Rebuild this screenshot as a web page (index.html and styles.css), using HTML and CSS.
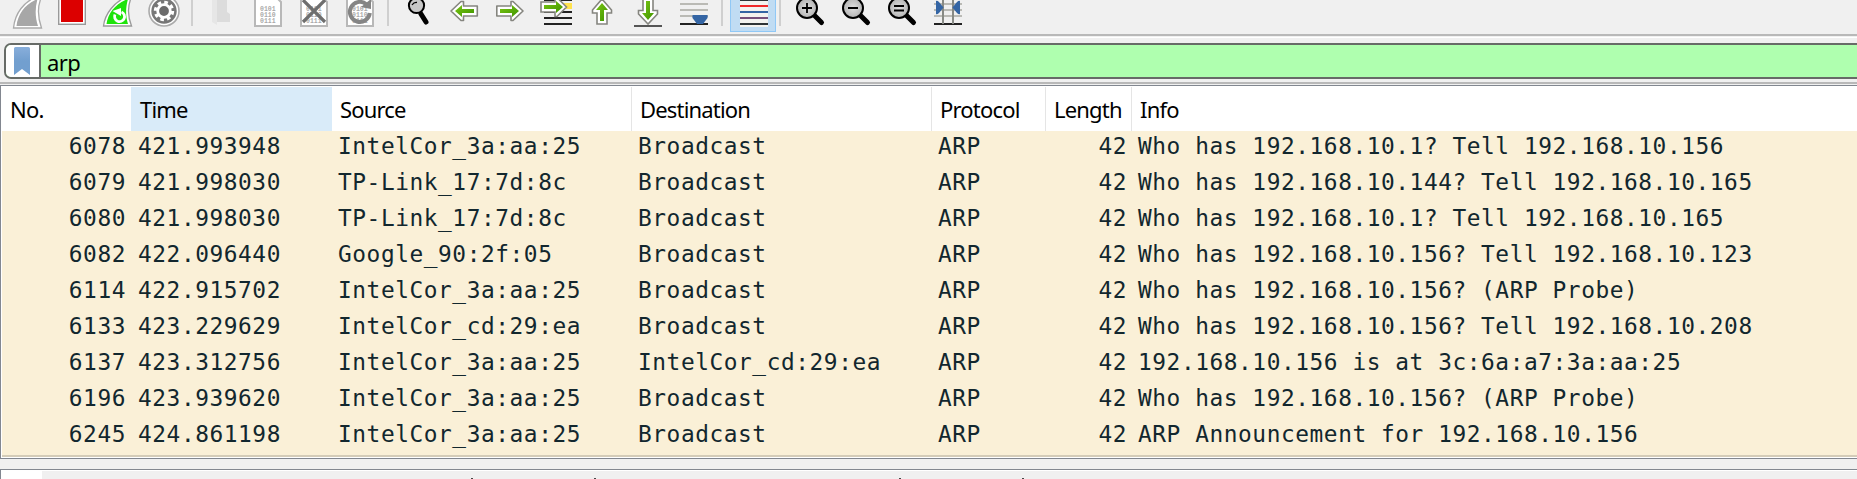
FILE: index.html
```
<!DOCTYPE html>
<html lang="en">
<head>
<meta charset="utf-8">
<title>Packet list</title>
<link rel="stylesheet" href="styles.css">
</head>
<body>
<div class="toolbar">
<svg class="icons" width="1000" height="34" viewBox="0 0 1000 34">
  <defs>
    <linearGradient id="green" x1="0" y1="0" x2="1" y2="1"><stop offset="0" stop-color="#7ac613"/><stop offset="1" stop-color="#3f9400"/></linearGradient>
    <radialGradient id="lens"><stop offset="0" stop-color="#e0e0e0"/><stop offset="1" stop-color="#b4b4b4"/></radialGradient>
    <g id="digits" class="bits"><text x="7" y="11">0101</text><text x="7" y="17">0110</text><text x="7" y="23">0111</text></g>
  </defs>
  <!-- capture -->
  <path d="M13.500 28C15 13 24 2 36 -3H41.500C37 7 38 18 41.500 28Z" fill="#fff" stroke="#aaa" stroke-width="1.300"/>
  <path d="M16.500 26C18 14 25 4 37.500 -1C35 8 35 17 38 26Z" fill="#a7a7a7"/>
  <rect x="58.700" y="-5" width="26.600" height="29.300" fill="#fff" stroke="#999" stroke-width="1.400"/>
  <rect x="61" y="-5" width="22" height="27" fill="#dc0000"/>
  <path d="M103.500 26C105 13 115 2 126 -3H131.500C127 7 128 17 131.500 26Z" fill="#fff" stroke="#999" stroke-width="1.300"/>
  <path d="M106.500 24C108 13 116 3 128 -1C125.500 8 125.500 16 128 24Z" fill="#1ee30b"/>
  <path d="M115 14.500A5 5 0 1 0 121.500 12" fill="none" stroke="#fff" stroke-width="2.800"/><path d="M112.500 11L121 8V16Z" fill="#fff"/>
  <circle cx="164" cy="11" r="15" fill="#fff" stroke="#aaa" stroke-width="1.600"/>
  <circle cx="164" cy="11" r="12.700" fill="#777"/>
  <circle cx="164" cy="11" r="8.600" fill="none" stroke="#fff" stroke-width="3.200" stroke-dasharray="3.600 3.155"/>
  <circle cx="164" cy="11" r="6.300" fill="#6b6b6b" stroke="#fff" stroke-width="2.800"/>
  <path d="M192 0V26M388 0V26M722 0V26M780 0V26" stroke="#cfcfcf" stroke-width="2"/>
  <!-- files -->
  <path d="M212 -2H217V25L212 22Z" fill="#e6e6e6"/><path d="M217 0H227V12L230 14V22H217Z" fill="#dcdcdc"/>
  <g fill="#fff" stroke="#b8b8b8" stroke-width="2">
    <path d="M255 26V-3H276L281 2V26Z"/><path d="M301 26V-3H322L327 2V26Z"/><path d="M347 26V-3H368L373 2V26Z"/>
  </g>
  <use href="#digits" x="253"/><use href="#digits" x="299"/><use href="#digits" x="345"/>
  <path d="M303 0L325 22M325 0L303 22" stroke="#6e6e6e" stroke-width="3.200"/>
  <path d="M366 4A10 10 0 1 0 369.800 13" fill="none" stroke="#858585" stroke-width="4"/><path d="M361 7L371 9V-1Z" fill="#858585"/>
  <!-- find -->
  <path d="M421 14L426 22" stroke="#000" stroke-width="5" stroke-linecap="round"/>
  <circle cx="416.500" cy="5.500" r="7.600" fill="#c8c8c8" stroke="#000" stroke-width="2"/>
  <path d="M412 5Q414 2 417 2.500" fill="none" stroke="#000" stroke-width="1.300"/>
  <!-- navigation -->
  <g fill="#fff" stroke="#85857f" stroke-width="1.600" stroke-linejoin="round">
    <path d="M451 11L461 1.500H463.500V6H477.300V16H463.500V20.500H461Z"/>
    <path d="M523 11L513 1.500H511V6H496.800V16H511V20.500H513Z"/>
  </g>
  <path d="M455 11L462 5V9H474V13H462V17Z" fill="url(#green)"/>
  <path d="M519 11L512 5V9H500V13H512V17Z" fill="url(#green)"/>
  <path d="M544 0H572M544 12H572M544 18H572M544 24H572" stroke="#222" stroke-width="2"/>
  <rect x="562" y="3" width="10" height="6" fill="#ffe24d"/>
  <path d="M566.500 7L557 -2.500H555V2H541V12H555V16.500H557Z" fill="#fff" stroke="#85857f" stroke-width="1.600"/>
  <path d="M563 7L556 1V5H544V9H556V13Z" fill="url(#green)"/>
  <path d="M602 -1L611.500 10V13H607V24H597V13H592.500V10Z" fill="#fff" stroke="#85857f" stroke-width="1.600"/>
  <path d="M602 3L608 10H604V21H600V10H596Z" fill="url(#green)"/>
  <path d="M648 24L638.500 14V10.500H643V-2H653V10.500H657.500V14Z" fill="#fff" stroke="#85857f" stroke-width="1.600"/>
  <path d="M648 20L642 13H646V1H650V13H654Z" fill="url(#green)"/>
  <path d="M634 26H662" stroke="#555" stroke-width="2"/>
  <path d="M680 4H708M680 10H708M680 16H708" stroke="#babab5" stroke-width="2"/>
  <path d="M680 24H708" stroke="#222" stroke-width="2"/>
  <path d="M693 15H707Q708 15 707.500 18L703 24H697L692.500 18Q692 15 693 15Z" fill="#3465a4"/>
  <!-- colourise -->
  <rect x="730.500" y="-2" width="45" height="33.500" fill="#c0dcf3" stroke="#90c8f6"/>
  <rect x="740" y="0" width="28" height="27" fill="#f3f3ef"/>
  <path d="M740 0H768M740 24H768" stroke="#2e3436" stroke-width="2"/>
  <path d="M740 6H768" stroke="#ef2929" stroke-width="2"/><path d="M740 12H768" stroke="#3465a4" stroke-width="2"/><path d="M740 18H768" stroke="#75507b" stroke-width="2"/>
  <!-- zoom -->
  <g stroke="#000" stroke-width="5" stroke-linecap="round"><path d="M814.500 15.500L821.500 22.500M860.500 15.500L867.500 22.500M906.500 15.500L913.500 22.500"/></g>
  <g fill="url(#lens)" stroke="#000" stroke-width="2"><circle cx="807" cy="8" r="10"/><circle cx="853" cy="8" r="10"/><circle cx="899" cy="8" r="10"/></g>
  <path d="M802 8H812M807 3V13M848 8H858M894 6H904M894 10.500H904" stroke="#000" stroke-width="1.800"/>
  <path d="M934 4H962M934 10H962M934 16H962" stroke="#babab5" stroke-width="2"/>
  <path d="M934 24H962" stroke="#222" stroke-width="2"/>
  <path d="M943 0V24M953 0V24" stroke="#888a85" stroke-width="2"/>
  <path d="M936 1Q937 0 939 2L943.500 7.500L939 13Q937 15 936 14ZM960 1Q959 0 957 2L952.500 7.500L957 13Q959 15 960 14Z" fill="#3465a4"/>
</svg>
</div>
<div class="filterbar">
  <div class="filter">
    <div class="bookmark"><svg width="16" height="28" viewBox="0 0 16 28"><defs><linearGradient id="bm" x1="0" y1="0" x2="0" y2="1"><stop offset="0" stop-color="#88aedb"/><stop offset=".5" stop-color="#729fcf"/></linearGradient></defs><path d="M0 1.500Q0 0 1.500 0H14.500Q16 0 16 1.500V28L8 22L0 28Z" fill="url(#bm)"/></svg></div>
    <div class="expression">arp</div>
  </div>
</div>
<div class="packets">
  <div class="row head"><div>No.</div><div class="sorted">Time</div><div>Source</div><div>Destination</div><div>Protocol</div><div>Length</div><div>Info</div></div>
  <div class="body">
  <div class="row"><div>6078</div><div>421.993948</div><div>IntelCor_3a:aa:25</div><div>Broadcast</div><div>ARP</div><div>42</div><div>Who has 192.168.10.1? Tell 192.168.10.156</div></div>
  <div class="row"><div>6079</div><div>421.998030</div><div>TP-Link_17:7d:8c</div><div>Broadcast</div><div>ARP</div><div>42</div><div>Who has 192.168.10.144? Tell 192.168.10.165</div></div>
  <div class="row"><div>6080</div><div>421.998030</div><div>TP-Link_17:7d:8c</div><div>Broadcast</div><div>ARP</div><div>42</div><div>Who has 192.168.10.1? Tell 192.168.10.165</div></div>
  <div class="row"><div>6082</div><div>422.096440</div><div>Google_90:2f:05</div><div>Broadcast</div><div>ARP</div><div>42</div><div>Who has 192.168.10.156? Tell 192.168.10.123</div></div>
  <div class="row"><div>6114</div><div>422.915702</div><div>IntelCor_3a:aa:25</div><div>Broadcast</div><div>ARP</div><div>42</div><div>Who has 192.168.10.156? (ARP Probe)</div></div>
  <div class="row"><div>6133</div><div>423.229629</div><div>IntelCor_cd:29:ea</div><div>Broadcast</div><div>ARP</div><div>42</div><div>Who has 192.168.10.156? Tell 192.168.10.208</div></div>
  <div class="row"><div>6137</div><div>423.312756</div><div>IntelCor_3a:aa:25</div><div>IntelCor_cd:29:ea</div><div>ARP</div><div>42</div><div>192.168.10.156 is at 3c:6a:a7:3a:aa:25</div></div>
  <div class="row"><div>6196</div><div>423.939620</div><div>IntelCor_3a:aa:25</div><div>Broadcast</div><div>ARP</div><div>42</div><div>Who has 192.168.10.156? (ARP Probe)</div></div>
  <div class="row"><div>6245</div><div>424.861198</div><div>IntelCor_3a:aa:25</div><div>Broadcast</div><div>ARP</div><div>42</div><div>ARP Announcement for 192.168.10.156</div></div>
  </div>
</div>
<div class="details"><div class="gutter"></div><svg width="1815" height="8" viewBox="42 471 1815 8"><path d="M471 478.500H473M594 478.500H596M899 478.500H901M1022 478.500H1024" stroke="#444"/></svg></div>
</body>
</html>
```
FILE: styles.css
```
* { box-sizing: border-box; }
html { overflow: hidden; }
body { margin: 0; height: 479px; overflow: hidden; background: #f0f0f0; font-family: "Noto Sans", sans-serif; color: #000; }
.toolbar { height: 38px; }
.toolbar { background: linear-gradient(#f0f0f0 34px, #b8b8b8 34px, #b8b8b8 36px, #f0f0f0 36px, #f0f0f0 37px, #fff 37px); }
.icons { display: block; }
.bits { font: bold 6.5px "Liberation Mono", monospace; fill: #aaa; }
.filterbar { height: 47px; padding: 5px 0 0 4px; background: linear-gradient(#f0f0f0 44px, #b8b8b8 44px, #b8b8b8 46px, #f0f0f0 46px); }
.filter { display: flex; height: 36px; border: 2px solid #676b67; border-right: 0; border-radius: 7px 0 0 7px; background: #afffaf; overflow: hidden; }
.bookmark { width: 35px; padding: 2px 0 0 8px; background: #fff; border-right: 2px solid #676b67; }
.bookmark svg { display: block; }
.expression { padding-left: 6px; font-size: 22px; line-height: 34px; letter-spacing: -.6px; }
.packets { height: 374px; border: 1px solid #828790; border-right: 0; padding: 1px 0 0 1px; background: #fff; }
.row { display: grid; grid-template-columns: 129px 201px 300px 300px 114px 86px 1fr; white-space: pre; }
.head { height: 44px; font-size: 22px; line-height: 44px; letter-spacing: -.82px; }
.head div { padding-left: 8px; border-right: 1px solid #e5e5e5; }
.head div:first-child, .head .sorted, .head div:last-child { border-right: 0; }
.head .sorted { padding-left: 9px; background: #d9ebf9; }
.body { height: 326px; background: #faf0d7; border-bottom: 2px solid #d4ccb8; color: #12272e; font: 22.8px "DejaVu Sans Mono", monospace; letter-spacing: .57px; }
.body .row { height: 36px; line-height: 30px; }
.body .row div { padding-left: 6px; }
.body .row div:nth-child(1) { text-align: right; padding: 0 5px 0 0; }
.body .row div:nth-child(2) { padding-left: 7px; }
.body .row div:nth-child(6) { text-align: right; padding: 0 5px 0 0; }
.details { display: flex; height: 10px; margin-top: 10px; border: 1px solid #828790; border-right: 0; border-bottom: 0; box-shadow: inset 0 1px #fff; }
.details svg { margin-top: 1px; }
.gutter { width: 41px; background: #fff; }
```
